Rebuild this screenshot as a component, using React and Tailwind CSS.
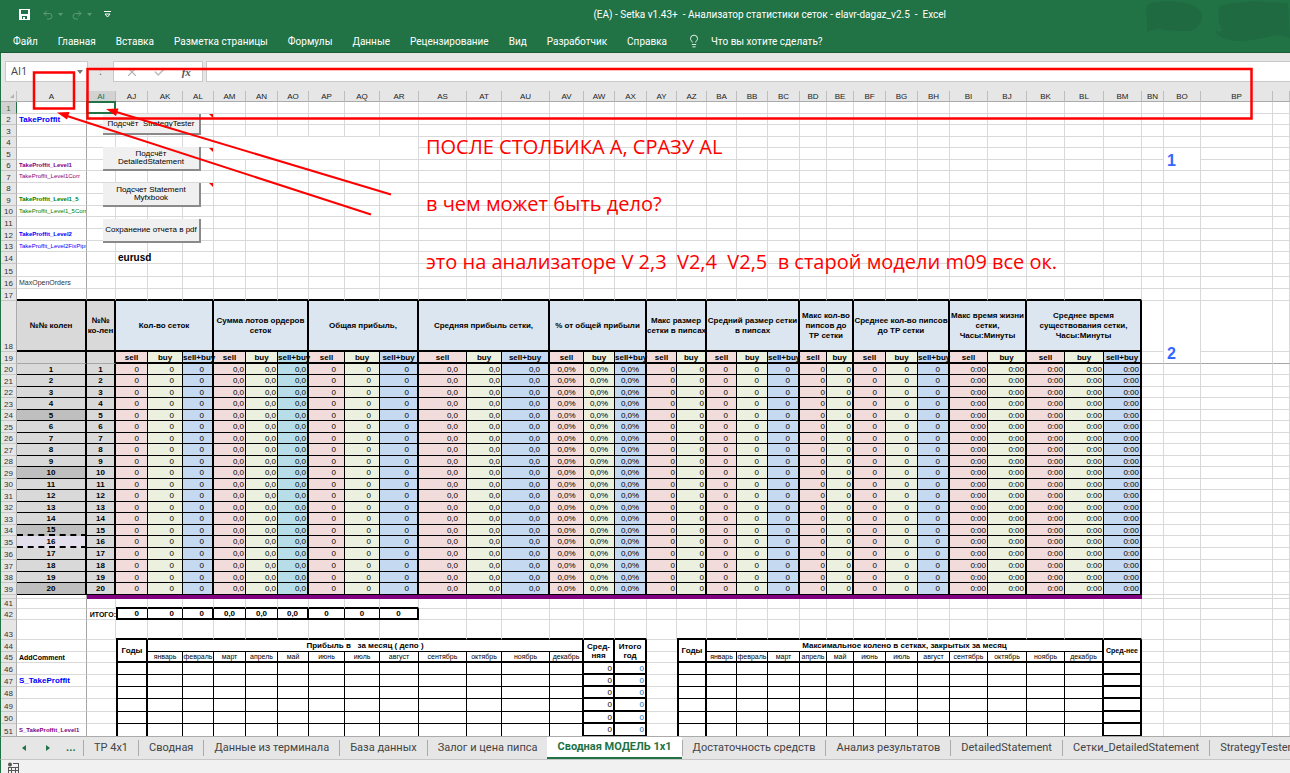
import React from "react";
import clsx from "clsx";
import { Undo2, Redo2, Lightbulb, X, Check } from "lucide-react";

const columns = [
  ["A", 70], ["AI", 29], ["AJ", 32], ["AK", 35], ["AL", 31], ["AM", 32], ["AN", 32], ["AO", 31],
  ["AP", 36], ["AQ", 35], ["AR", 39], ["AS", 48], ["AT", 35], ["AU", 48], ["AV", 34], ["AW", 31],
  ["AX", 32], ["AY", 30], ["AZ", 30], ["BA", 30], ["BB", 31], ["BC", 32], ["BD", 27], ["BE", 27],
  ["BF", 32], ["BG", 32], ["BH", 32], ["BI", 38], ["BJ", 39], ["BK", 38], ["BL", 39], ["BM", 38],
  ["BN", 22], ["BO", 37], ["BP", 72], ["", 0],
];
const names = columns.map(([name]) => name);
const col = (name) => names.indexOf(name);

const AI = col("AI");
const AJ = col("AJ");
const AR = col("AR");
const AX = col("AX");
const AZ = col("AZ");
const BM = col("BM");

// heights of rows 1..52
const rowHeights = [
  12, 11, 12, 11, 12, 11, 12, 11, 12, 11, 12, 12, 11, 12, 13, 12, 12, 51, 12,
  11, 12, 11, 12, 11, 12, 11, 12, 11, 12, 11, 12, 11, 12, 11, 12, 12, 12, 11, 12,
  4, 10, 10, 20, 12, 11, 12, 12, 12, 13, 12, 13, 12,
];

const groups = [
  { from: "AJ", to: "AL", title: "Кол-во сеток", value: "0", align: "inset" },
  { from: "AM", to: "AO", title: "Сумма лотов ордеров\nсеток", value: "0,0", align: "edge" },
  { from: "AP", to: "AR", title: "Общая прибыль,", value: "0", align: "inset" },
  { from: "AS", to: "AU", title: "Средняя прибыль сетки,", value: "0,0", align: "inset" },
  { from: "AV", to: "AX", title: "% от общей прибыли", value: "0,0%", align: "center" },
  { from: "AY", to: "AZ", title: "Макс размер\nсетки в пипсах", value: "0", align: "edge" },
  { from: "BA", to: "BC", title: "Средний размер сетки\nв пипсах", value: "0", align: "inset" },
  { from: "BD", to: "BE", title: "Макс кол-во\nпипсов до\nТР сетки", value: "0", align: "edge" },
  { from: "BF", to: "BH", title: "Среднее кол-во пипсов\nдо ТР сетки", value: "0", align: "inset" },
  { from: "BI", to: "BJ", title: "Макс время жизни\nсетки,\nЧасы:Минуты", value: "0:00", align: "edge" },
  { from: "BK", to: "BM", title: "Среднее время\nсуществования сетки,\nЧасы:Минуты", value: "0:00", align: "edge" },
].map((g) => ({ ...g, start: col(g.from), end: col(g.to) }));

const kinds = [
  { label: "sell", bg: "bg-[#f2dcdb]" },
  { label: "buy", bg: "bg-[#ebf1de]" },
  { label: "sell+buy", bg: "bg-[#c5d9f1]" },
];

const alignments = {
  inset: "text-right pr-2",
  edge: "text-right pr-px",
  center: "text-center",
};

const months = [
  "январь", "февраль", "март", "апрель", "май", "июнь",
  "июль", "август", "сентябрь", "октябрь", "ноябрь", "декабрь",
];

const labels = {
  2: ["TakeProffit", "font-bold text-[#0000ff]"],
  6: ["TakeProffit_Level1", "font-bold text-[6px] text-[#800080]"],
  7: ["TakeProffit_Level1Corr", "text-[6px] text-[#800080]"],
  9: ["TakeProffit_Level1_5", "font-bold text-[6px] text-[#008000]"],
  10: ["TakeProffit_Level1_5Corr", "text-[6px] text-[#008000]"],
  12: ["TakeProffit_Level2", "font-bold text-[6px] text-[#0000ff]"],
  13: ["TakeProffit_Level2FixPips", "text-[6px] text-[#0000ff]"],
  16: ["MaxOpenOrders", "text-[7px] text-[#333333]"],
  45: ["AddComment", "font-bold text-[7px] text-black"],
  47: ["S_TakeProffit", "font-bold text-[#0000ff]"],
  51: ["S_TakeProffit_Level1", "font-bold text-[6px] text-[#800080]"],
};

const menu = [
  "Файл", "Главная", "Вставка", "Разметка страницы", "Формулы",
  "Данные", "Рецензирование", "Вид", "Разработчик", "Справка",
];

const tabs = [
  "TP 4x1", "Сводная", "Данные из терминала", "База данных", "Залог и цена пипса",
  "Сводная МОДЕЛЬ 1x1", "Достаточность средств", "Анализ результатов",
  "DetailedStatement", "Сетки_DetailedStatement", "StrategyTester",
];

const macros = [
  { text: "Подсчёт  StrategyTester", place: "top-[23px] h-[21px]" },
  { text: "Подсчёт\nDetailedStatement", place: "top-14 h-6" },
  { text: "Подсчет Statement\nMyfxbook", place: "top-[92px] h-6" },
  { text: "Сохранение отчета в pdf", place: "top-32 h-6" },
];

const inYears = (c) => (c >= AJ && c <= AX) || (c >= AZ && c <= BM);

function leftBorder(r, c) {
  if ((r === 42 && c === AJ) || (r >= 44 && (c === AJ || c === AZ))) return "border-l-2 border-l-black";
  return "";
}

function rightBorder(r, c) {
  const group = groups.find((g) => c >= g.start && c <= g.end);
  if (r >= 18 && r <= 39) {
    if (c <= AI) return "border-r-2 border-r-black";
    if (group) return c === group.end ? "border-r-2 border-r-black" : "border-r border-r-black";
  }
  if (r === 40 && c >= AI && c <= BM) return "border-r border-r-[#800080]";
  if (r === 42 && c >= AJ && c <= AR) {
    return c === group.end ? "border-r-2 border-r-black" : "border-r border-r-black";
  }
  if (r >= 44) {
    const thick = [AJ, AX - 2, AX - 1, AX, AZ, BM - 1, BM];
    if (thick.includes(c)) return "border-r-2 border-r-black";
    if (inYears(c)) return "border-r border-r-black";
    // the outline of the next column stands in for this line
    if (c === AI || c === AZ - 1) return "";
  }
  if (r === 42 && c === AI) return "";
  if (c === 0) return "border-r border-r-[#a6a6a6]";
  return "border-r border-r-[#d9d9d9]";
}

function bottomBorder(r, c) {
  if ((r === 17 || r === 18) && c <= BM) return "border-b-2 border-b-black";
  if (r === 19) return c >= AJ && c <= BM ? "border-b-2 border-b-black" : "border-b border-b-[#a6a6a6]";
  if ((r === 34 || r === 35) && c === 0) return "border-b-2 border-b-black [border-bottom-style:dashed]";
  if (r >= 20 && r <= 39 && c <= BM) return "border-b border-b-black";
  if (r === 40 && c >= AI && c <= BM) return "border-b border-b-[#800080]";
  if ((r === 41 || r === 42) && c >= AJ && c <= AR) return "border-b-2 border-b-black";
  if ((r === 43 || r === 45) && inYears(c)) return "border-b-2 border-b-black";
  if (r === 44 && inYears(c)) return "border-b border-b-black";
  if (r >= 46 && inYears(c)) {
    return [AX - 1, AX, BM].includes(c) ? "border-b-2 border-b-black" : "border-b border-b-black";
  }
  return "border-b border-b-[#d9d9d9]";
}

function getCell(r, c) {
  const group = groups.find((g) => c >= g.start && c <= g.end);

  if (r === 1 && c === AI) return { selected: true };
  if (r === 4 && c === col("AM")) return { colSpan: 6, rowSpan: 2 };
  if (c === col("BO") && (r === 5 || r === 18)) {
    return {
      text: r === 5 ? "1" : "2",
      rowSpan: 2,
      bottom: true,
      className: "pl-[3px] text-[16px] font-bold text-[#3366ff]",
    };
  }
  if (c === col("AL") && [2, 5, 8].includes(r)) return { note: true };
  if (r === 14 && c === AJ) return { text: "eurusd", className: "pl-0.5 text-[10px] font-bold" };

  if (r === 18) {
    if (c === 0) return { text: "№№ колен", className: "bg-[#d9d9d9] text-center font-bold" };
    if (c === AI) return { text: "№№\nко-лен", className: "bg-[#d9d9d9] text-center font-bold" };
    if (group) return { text: group.title, colSpan: group.end - group.start + 1, className: "bg-[#dce6f1] text-center font-bold" };
  }
  if (r >= 19 && r <= 39) {
    if (c === 0) {
      const n = r - 19;
      return {
        text: n > 0 ? n : "",
        className: clsx("text-center font-bold", n === 16 ? "bg-[#e4dfec]" : n > 0 && n % 5 === 0 ? "bg-[#bfbfbf]" : "bg-[#d9d9d9]"),
      };
    }
    if (c === AI) return { text: r > 19 ? r - 19 : "", className: "bg-[#d9d9d9] text-center font-bold" };
    if (group) {
      const kind = kinds[c - group.start];
      const bg = c === col("AO") ? "bg-[#b7dee8]" : kind.bg;
      if (r === 19) return { text: kind.label, className: clsx(bg, "text-center font-bold") };
      const align = c === col("AT") ? "edge" : group.align;
      return { text: group.value, className: clsx(bg, alignments[align]) };
    }
  }
  if (r === 40 && c >= AI && c <= BM) return { className: "bg-[#800080]" };
  if (r === 42) {
    if (c === AI) return { text: "ИТОГО:", className: "text-right font-bold text-[7px]" };
    if (c >= AJ && c <= AR) {
      return { text: group.value, className: clsx("font-bold", c <= col("AL") ? "pr-2 text-right" : "text-center") };
    }
  }
  if (r === 44) {
    if (c === AJ || c === AZ) return { text: "Годы", rowSpan: 2, className: "text-center font-bold" };
    if (c === AJ + 1) return { text: "Прибыль в   за месяц ( депо )", colSpan: 12, className: "text-center font-bold" };
    if (c === AZ + 1) return { text: "Максимальное колено в сетках, закрытых за месяц", colSpan: 12, className: "text-center font-bold" };
    if (c === AX - 1) return { text: "Сред-\nняя", rowSpan: 2, className: "text-center font-bold" };
    if (c === AX) return { text: "Итого\nгод", rowSpan: 2, className: "text-center font-bold" };
    if (c === BM) return { text: "Сред-нее", rowSpan: 2, className: "text-center font-bold text-[7px]" };
  }
  if (r === 45) {
    if (c > AJ && c <= AJ + 12) return { text: months[c - AJ - 1], className: "text-center text-[7px]" };
    if (c > AZ && c <= AZ + 12) return { text: months[c - AZ - 1], className: "text-center text-[7px]" };
  }
  if (r >= 46 && c === AX - 1) return { text: "0", className: "pr-px text-right" };
  if (r >= 46 && c === AX) return { text: "0", className: "pr-px text-right text-[#0070c0]" };
  if (c === 0 && labels[r]) return { text: labels[r][0], className: clsx("overflow-hidden pl-0.5", labels[r][1]) };
  return {};
}

// rows of visible cells; the ones under a merged cell are skipped
const rows = (() => {
  const covered = new Set();
  return rowHeights.map((height, i) => {
    const r = i + 1;
    const cells = [];
    columns.forEach((_, c) => {
      if (covered.has(`${r}:${c}`)) return;
      const cell = getCell(r, c);
      const colSpan = cell.colSpan || 1;
      const rowSpan = cell.rowSpan || 1;
      for (let y = 0; y < rowSpan; y++) {
        for (let x = 0; x < colSpan; x++) covered.add(`${r + y}:${c + x}`);
      }
      cells.push({
        ...cell,
        c,
        borders: clsx(leftBorder(r, c), rightBorder(r, c + colSpan - 1), bottomBorder(r + rowSpan - 1, c)),
      });
    });
    return { r, height, cells };
  });
})();

function TitleBar() {
  return (
    <header className="relative h-[53px] shrink-0 overflow-hidden border-b border-[#1a5c38] bg-[#217346] font-[Roboto,'Noto_Sans',sans-serif] text-[10px] text-white">
      <svg className="absolute top-0 right-0 h-[52px] w-[160px]" viewBox="0 0 160 52" fill="#1f6a41">
        <path d="M18 4 Q30 0 50 2 Q70 5 72 15 Q72 27 60 31 Q42 31 30 29 Q22 29 16 33 Q18 28 17 20 Q15 10 18 4Z" />
        <path d="M90 6 Q110 0 140 2 L158 3 L160 38 Q150 33 138 37 Q112 43 98 40 Q86 36 85 31 Q92 33 92 30 Q86 18 90 6Z" />
      </svg>
      <div className="flex h-[29px] items-center">
        <div className="flex items-center pl-[18px]">
          <button aria-label="Сохранить" className="mr-[11px]">
            <svg width="13" height="13" viewBox="0 0 13 13">
              <path fill="#fff" fillRule="evenodd" d="M1 1h11v11H1zM3 2v4h7V2zM4 8v3h1V9h2v2h2V8z" />
            </svg>
          </button>
          <button aria-label="Отменить" className="mr-1 text-[#5d9a78]"><Undo2 size={12} /></button>
          <svg width="5" height="3" className="mr-2" viewBox="0 0 5 3"><path d="M0 0h5L2.500 3z" fill="#5d9a78" /></svg>
          <button aria-label="Вернуть" className="mr-1 text-[#5d9a78]"><Redo2 size={12} /></button>
          <svg width="5" height="3" className="mr-3" viewBox="0 0 5 3"><path d="M0 0h5L2.500 3z" fill="#5d9a78" /></svg>
          <button aria-label="Настройка панели">
            <svg width="7" height="7" viewBox="0 0 7 7" fill="none" stroke="#fff"><path d="M0 .5h7M1 3h5L3.500 6z" /></svg>
          </button>
        </div>
        <h1 className="mr-[344px] ml-auto whitespace-pre">(EA) - Setka v1.43+  - Анализатор статистики сеток - elavr-dagaz_v2.5  -  Excel</h1>
      </div>
      <nav className="flex h-6 items-center gap-5 pl-[13px]">
        {menu.map((item) => (
          <button key={item} className="whitespace-nowrap">{item}</button>
        ))}
        <button className="flex items-center gap-2.5 whitespace-nowrap">
          <Lightbulb size={14} strokeWidth={1.500} />
          Что вы хотите сделать?
        </button>
      </nav>
    </header>
  );
}

function FormulaBar() {
  return (
    <div className="flex h-[38px] shrink-0 border-l border-[#217346] bg-[#e6e6e6] pt-2 pb-[9px] font-['Open_Sans','Noto_Sans',sans-serif]">
      <div className="ml-1 flex w-[83px] items-center border border-[#c9c9c9] bg-white">
        <input aria-label="Имя" defaultValue="AI1" className="w-[71px] pl-[5px] text-[11px] text-[#444444] outline-none" />
        <svg width="6" height="4" viewBox="0 0 6 4"><path d="M0 0h6L3 4z" fill="#777" /></svg>
      </div>
      <div className="flex w-[25px] items-center justify-center text-[11px] text-[#666666]">:</div>
      <div className="flex w-[90px] items-center justify-around border border-[#c9c9c9] bg-white px-1">
        <button aria-label="Отмена"><X size={14} strokeWidth={2} color="#b5b5b5" /></button>
        <button aria-label="Ввод"><Check size={14} strokeWidth={2.500} color="#bbbbbb" /></button>
        <button aria-label="Вставить функцию" className="font-['Liberation_Serif',serif] text-[11px] leading-3 font-bold text-[#555555] italic">fx</button>
      </div>
      <input aria-label="Строка формул" className="ml-[3px] min-w-0 flex-1 border border-r-0 border-[#c9c9c9] bg-white px-1 text-[11px] outline-none" />
    </div>
  );
}

function Sheet() {
  return (
    <main className="relative min-h-0 flex-1 overflow-hidden border-l border-[#217346] bg-white font-['Liberation_Sans',sans-serif] text-[8px] leading-[9px] text-black">
      <table className="w-full table-fixed border-separate border-spacing-0">
        <colgroup>
          <col className="w-4" />
          {columns.map(([name, width]) => (
            <col key={name} style={width ? { width } : undefined} />
          ))}
        </colgroup>
        <thead>
          <tr className="h-[11px] bg-[#e6e6e6] text-[#222222]">
            <th className="border-r border-b border-r-[#bdbdbd] border-b-[#ababab] p-0">
              <svg className="mr-0.5 ml-auto block" width="4" height="4" viewBox="0 0 4 4"><path d="M4 0v4H0z" fill="#b0b0b0" /></svg>
            </th>
            {names.map((name) => (
              <th
                key={name}
                className={clsx(
                  "border-r border-b border-r-[#bdbdbd] p-0 font-normal",
                  name === "AI" ? "border-b-[#217346] bg-[#d2d2d2] text-[#217346]" : "border-b-[#ababab]"
                )}
              >
                {name}
              </th>
            ))}
          </tr>
        </thead>
        <tbody>
          {rows.map(({ r, height, cells }) => (
            <tr key={r} style={{ height }}>
              <th
                className={clsx(
                  "border-r border-b border-b-[#c6c6c6] p-0 text-center align-bottom font-normal",
                  r === 1 ? "border-r-[#217346] bg-[#d2d2d2] text-[#217346]" : "border-r-[#ababab] bg-[#e6e6e6] text-[#333333]"
                )}
              >
                {r === 40 ? "" : r}
              </th>
              {cells.map((cell) => (
                <td
                  key={cell.c}
                  colSpan={cell.colSpan}
                  rowSpan={cell.rowSpan}
                  className={clsx(
                    "p-0 whitespace-pre",
                    cell.bottom ? "align-bottom leading-[18px]" : "align-middle",
                    r === 18 && !cell.bottom && "leading-[10px]",
                    (cell.selected || cell.note) && "relative",
                    cell.borders,
                    cell.className
                  )}
                >
                  {cell.text}
                  {cell.selected && <span className="absolute -inset-px border-2 border-[#217346]" />}
                  {cell.note && (
                    <svg className="absolute top-0 right-0" width="4" height="4" viewBox="0 0 4 4"><path d="M0 0h4v4z" fill="#f00" /></svg>
                  )}
                </td>
              ))}
            </tr>
          ))}
        </tbody>
      </table>
      {macros.map((macro) => (
        <button
          key={macro.text}
          className={clsx(
            "absolute left-[102px] w-[98px] border-r-2 border-b-2 border-[#8a8a8a] bg-[#f0f0f0] text-center leading-2 whitespace-pre",
            macro.place
          )}
        >
          {macro.text}
        </button>
      ))}
    </main>
  );
}

function SheetTabs() {
  return (
    <nav className="flex h-6 shrink-0 overflow-hidden border-t border-b border-l border-t-[#ababab] border-b-[#c6c6c6] border-l-[#217346] bg-[#e6e6e6] font-[Roboto,'Noto_Sans',sans-serif] text-[11px] text-[#444444]">
      <div className="flex w-[82px] shrink-0 items-center pl-[21px]">
        <button aria-label="Назад"><svg width="4" height="6" viewBox="0 0 4 6"><path d="M4 0v6L0 3z" fill="#217346" /></svg></button>
        <button aria-label="Вперёд" className="ml-5"><svg width="4" height="6" viewBox="0 0 4 6"><path d="M0 0v6L4 3z" fill="#217346" /></svg></button>
        <button aria-label="Все листы" className="ml-4 font-bold text-[#217346]">...</button>
      </div>
      {tabs.map((tab) =>
        tab === "Сводная МОДЕЛЬ 1x1" ? (
          <button key={tab} className="shrink-0 border-b-2 border-[#217346] bg-white px-2.5 font-bold text-[#217346]">{tab}</button>
        ) : (
          <button key={tab} className="flex shrink-0 items-center whitespace-nowrap">
            <span className="h-4 w-px bg-[#ababab]" />
            <span className="px-2.5">{tab}</span>
          </button>
        )
      )}
    </nav>
  );
}

function StatusBar() {
  return (
    <footer className="h-[13px] shrink-0 border-l border-[#217346] bg-[#f1f1f1] pt-0.5 pl-1.5">
      <svg width="12" height="11" viewBox="0 0 12 11" fill="none" stroke="#555">
        <circle cx="3" cy="2.500" r="2" fill="#555" stroke="none" />
        <path d="M6 1.500h5.500M1.500 5v6M1.500 5.500h10V11M4.500 5.500V11M8.500 5.500V11M1.500 8.500h10M11.500 1v5" />
      </svg>
    </footer>
  );
}

// red markup drawn over the whole window
function Markup() {
  return (
    <div className="pointer-events-none absolute inset-0 font-['Open_Sans','Noto_Sans',sans-serif] text-[20px] leading-7 whitespace-pre text-[#ff0000]">
      <svg className="absolute top-0 left-0" width="1290" height="300" viewBox="0 0 1290 300" fill="none" stroke="#f00" strokeWidth="2">
        <rect x="34" y="72.500" width="40" height="36" strokeWidth="2.500" />
        <rect x="87.500" y="69" width="1164" height="49.500" strokeWidth="2.500" />
        <path d="M371 214.500L64 115M391 194.500L113 111" />
        <path d="M57 112.500L69.500 112L67 119.500zM106 109L118.500 108.500L116 116z" fill="#f00" stroke="none" />
      </svg>
      <p className="absolute top-[133px] left-[426px]">ПОСЛЕ СТОЛБИКА А, СРАЗУ AL</p>
      <p className="absolute top-[190px] left-[426px]">в чем может быть дело?</p>
      <p className="absolute top-[248px] left-[426px]">это на анализаторе V 2,3  V2,4  V2,5  в старой модели m09 все ок.</p>
    </div>
  );
}

export default function App() {
  return (
    <div className="relative flex h-screen flex-col overflow-hidden bg-white">
      <TitleBar />
      <FormulaBar />
      <Sheet />
      <SheetTabs />
      <StatusBar />
      <Markup />
    </div>
  );
}
